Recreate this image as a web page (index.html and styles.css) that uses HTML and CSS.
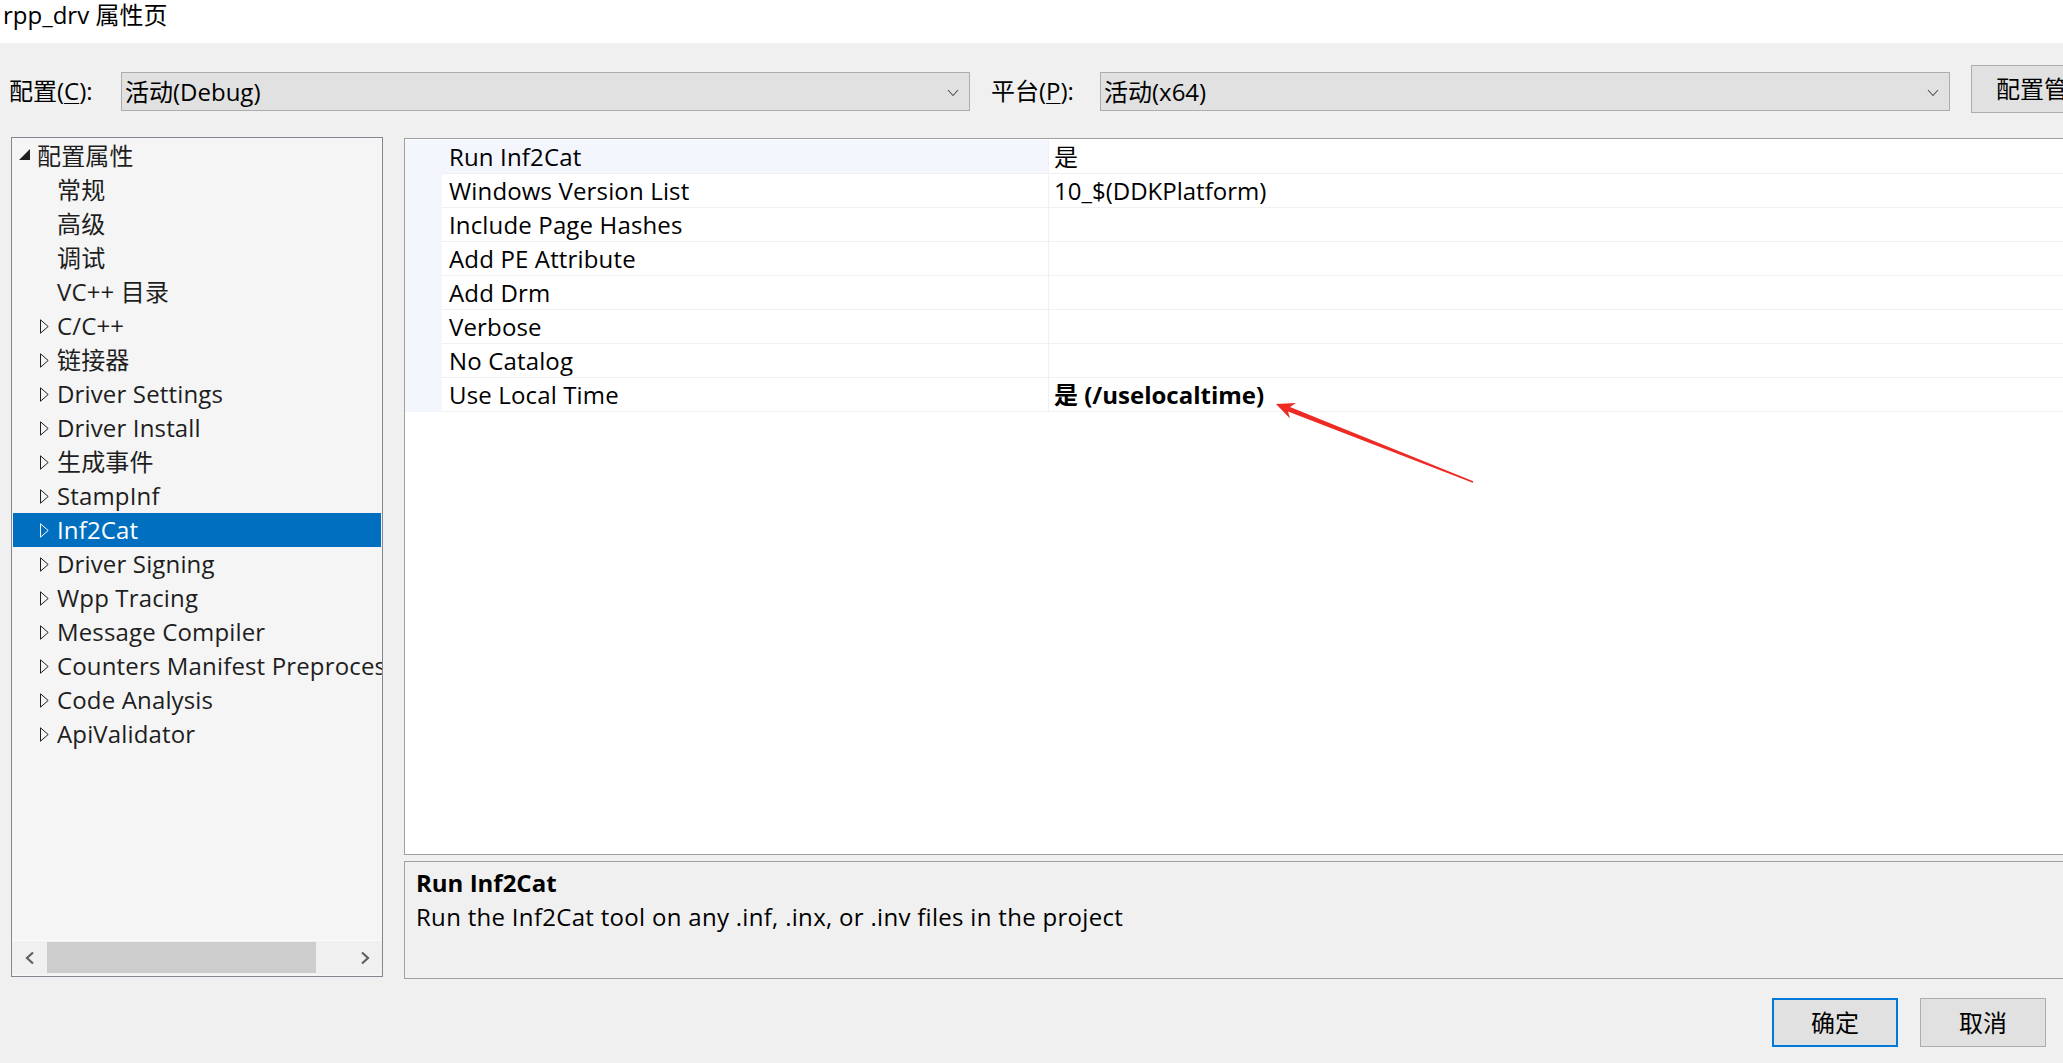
FILE: index.html
```html
<!DOCTYPE html>
<html lang="zh-CN">
<head>
<meta charset="utf-8">
<title>rpp_drv 属性页</title>
<link rel="stylesheet" href="styles.css">
</head>
<body>
<div class="window">
  <div class="titlebar">rpp_drv 属性页</div>

  <div class="toolbar">
    <span class="label label-config">配置(<u>C</u>):</span>
    <div class="combo combo-config">
      <span class="combo-text">活动(Debug)</span>
      <svg class="chev" width="12" height="8" viewBox="0 0 12 8"><path d="M1 1 L6 6.5 L11 1" fill="none" stroke="#505050" stroke-width="1.1"/></svg>
    </div>
    <span class="label label-platform">平台(<u>P</u>):</span>
    <div class="combo combo-platform">
      <span class="combo-text">活动(x64)</span>
      <svg class="chev" width="12" height="8" viewBox="0 0 12 8"><path d="M1 1 L6 6.5 L11 1" fill="none" stroke="#505050" stroke-width="1.1"/></svg>
    </div>
    <div class="btn btn-manager">配置管理器(<u>O</u>)...</div>
  </div>

  <div class="main">
    <div class="tree">
      <div class="tree-rows">
        <div class="row root">
          <svg class="tw-open" width="11" height="11" viewBox="0 0 11 11"><path d="M11 0 L11 11 L0 11 Z" fill="#1e1e1e"/></svg>
          <span>配置属性</span>
        </div>
        <div class="row leaf"><span>常规</span></div>
        <div class="row leaf"><span>高级</span></div>
        <div class="row leaf"><span>调试</span></div>
        <div class="row leaf"><span>VC++ 目录</span></div>
        <div class="row child"><svg class="tw" width="9" height="15" viewBox="0 0 9 15"><path d="M0.5 0.8 L8.2 7.5 L0.5 14.2 Z" fill="none" stroke="currentColor" stroke-width="1"/></svg><span>C/C++</span></div>
        <div class="row child"><svg class="tw" width="9" height="15" viewBox="0 0 9 15"><path d="M0.5 0.8 L8.2 7.5 L0.5 14.2 Z" fill="none" stroke="currentColor" stroke-width="1"/></svg><span>链接器</span></div>
        <div class="row child"><svg class="tw" width="9" height="15" viewBox="0 0 9 15"><path d="M0.5 0.8 L8.2 7.5 L0.5 14.2 Z" fill="none" stroke="currentColor" stroke-width="1"/></svg><span>Driver Settings</span></div>
        <div class="row child"><svg class="tw" width="9" height="15" viewBox="0 0 9 15"><path d="M0.5 0.8 L8.2 7.5 L0.5 14.2 Z" fill="none" stroke="currentColor" stroke-width="1"/></svg><span>Driver Install</span></div>
        <div class="row child"><svg class="tw" width="9" height="15" viewBox="0 0 9 15"><path d="M0.5 0.8 L8.2 7.5 L0.5 14.2 Z" fill="none" stroke="currentColor" stroke-width="1"/></svg><span>生成事件</span></div>
        <div class="row child"><svg class="tw" width="9" height="15" viewBox="0 0 9 15"><path d="M0.5 0.8 L8.2 7.5 L0.5 14.2 Z" fill="none" stroke="currentColor" stroke-width="1"/></svg><span>StampInf</span></div>
        <div class="row child selected"><svg class="tw" width="9" height="15" viewBox="0 0 9 15"><path d="M0.5 0.8 L8.2 7.5 L0.5 14.2 Z" fill="none" stroke="currentColor" stroke-width="1"/></svg><span>Inf2Cat</span></div>
        <div class="row child"><svg class="tw" width="9" height="15" viewBox="0 0 9 15"><path d="M0.5 0.8 L8.2 7.5 L0.5 14.2 Z" fill="none" stroke="currentColor" stroke-width="1"/></svg><span>Driver Signing</span></div>
        <div class="row child"><svg class="tw" width="9" height="15" viewBox="0 0 9 15"><path d="M0.5 0.8 L8.2 7.5 L0.5 14.2 Z" fill="none" stroke="currentColor" stroke-width="1"/></svg><span>Wpp Tracing</span></div>
        <div class="row child"><svg class="tw" width="9" height="15" viewBox="0 0 9 15"><path d="M0.5 0.8 L8.2 7.5 L0.5 14.2 Z" fill="none" stroke="currentColor" stroke-width="1"/></svg><span>Message Compiler</span></div>
        <div class="row child"><svg class="tw" width="9" height="15" viewBox="0 0 9 15"><path d="M0.5 0.8 L8.2 7.5 L0.5 14.2 Z" fill="none" stroke="currentColor" stroke-width="1"/></svg><span>Counters Manifest Preprocessor</span></div>
        <div class="row child"><svg class="tw" width="9" height="15" viewBox="0 0 9 15"><path d="M0.5 0.8 L8.2 7.5 L0.5 14.2 Z" fill="none" stroke="currentColor" stroke-width="1"/></svg><span>Code Analysis</span></div>
        <div class="row child"><svg class="tw" width="9" height="15" viewBox="0 0 9 15"><path d="M0.5 0.8 L8.2 7.5 L0.5 14.2 Z" fill="none" stroke="currentColor" stroke-width="1"/></svg><span>ApiValidator</span></div>
      </div>
      <div class="hscroll">
        <div class="sb-btn">
          <svg width="12" height="14" viewBox="0 0 12 14"><path d="M9 1.5 L3 7 L9 12.5" fill="none" stroke="#606060" stroke-width="2.2"/></svg>
        </div>
        <div class="sb-track"><div class="sb-thumb"></div></div>
        <div class="sb-btn">
          <svg width="12" height="14" viewBox="0 0 12 14"><path d="M3 1.5 L9 7 L3 12.5" fill="none" stroke="#606060" stroke-width="2.2"/></svg>
        </div>
      </div>
    </div>

    <div class="right">
      <div class="grid">
        <div class="prow first"><div class="gut"></div><div class="pname">Run Inf2Cat</div><div class="pval">是</div></div>
        <div class="prow"><div class="gut"></div><div class="pname">Windows Version List</div><div class="pval">10_$(DDKPlatform)</div></div>
        <div class="prow"><div class="gut"></div><div class="pname">Include Page Hashes</div><div class="pval"></div></div>
        <div class="prow"><div class="gut"></div><div class="pname">Add PE Attribute</div><div class="pval"></div></div>
        <div class="prow"><div class="gut"></div><div class="pname">Add Drm</div><div class="pval"></div></div>
        <div class="prow"><div class="gut"></div><div class="pname">Verbose</div><div class="pval"></div></div>
        <div class="prow"><div class="gut"></div><div class="pname">No Catalog</div><div class="pval"></div></div>
        <div class="prow"><div class="gut"></div><div class="pname">Use Local Time</div><div class="pval bold">是 (/uselocaltime)</div></div>
      </div>
      <div class="desc">
        <div class="desc-title">Run Inf2Cat</div>
        <div class="desc-text">Run the Inf2Cat tool on any .inf, .inx, or .inv files in the project</div>
      </div>
    </div>
  </div>

  <div class="footer">
    <div class="btn btn-ok">确定</div>
    <div class="btn btn-cancel">取消</div>
  </div>

  <svg class="annot" width="2063" height="1063" viewBox="0 0 2063 1063">
    <polygon points="1276,404 1296,403 1290,407 1473.3,481.3 1472.7,482.7 1288,411.5 1290,418.5" fill="#ee2a24"/>
  </svg>
</div>
</body>
</html>
```

FILE: styles.css
```css
* { box-sizing: border-box; }
html, body {
  margin: 0;
  padding: 0;
  width: 2063px;
  height: 1063px;
  overflow: hidden;
  background: #f0f0f0;
}
.window {
  position: relative;
  width: 2063px;
  height: 1063px;
  overflow: hidden;
  font-family: "Open Sans", "Noto Sans CJK SC", sans-serif;
  font-size: 24px;
  color: #000;
}
u { text-decoration: underline; text-underline-offset: 3px; text-decoration-thickness: 1px; }

.titlebar {
  height: 43px;
  background: #fff;
  padding-left: 3px;
  line-height: 30px;
  white-space: nowrap;
}

.toolbar {
  height: 94px;
  display: flex;
  align-items: flex-start;
  padding-top: 22px;
  white-space: nowrap;
}
.toolbar > * { flex: none; }
.label {
  height: 39px;
  margin-top: 7px;
  line-height: 38px;
  color: #000;
}
.label-config { margin-left: 9px; width: 112px; }
.label-platform { margin-left: 21px; width: 109px; }
.combo {
  margin-top: 7px;
  height: 39px;
  background: #e1e1e1;
  border: 1px solid #adadad;
  display: flex;
  align-items: center;
  justify-content: space-between;
  padding: 0 10px 0 3px;
}
.combo-config { width: 849px; }
.combo-platform { width: 850px; }
.combo-text { line-height: 36px; }
.chev { margin-top: 2px; }
.btn {
  background: #e1e1e1;
  border: 1px solid #adadad;
  text-align: center;
  white-space: nowrap;
  overflow: hidden;
}
.btn-manager {
  margin-left: 21px;
  width: 260px;
  height: 48px;
  line-height: 46px;
  text-align: left;
  padding-left: 24px;
}

.main {
  display: flex;
  align-items: flex-start;
  height: 841px;
}
.main > * { flex: none; }
.tree {
  margin-left: 11px;
  width: 372px;
  height: 840px;
  background: #f5f5f5;
  border: 1px solid #828790;
  display: flex;
  flex-direction: column;
  overflow: hidden;
}
.tree-rows {
  flex: 1;
  padding-top: 1px;
  overflow: hidden;
}
.row {
  height: 34px;
  display: flex;
  align-items: center;
  white-space: nowrap;
  color: #1e1e1e;
  margin-right: 1px;
}
.row span { line-height: 34px; letter-spacing: 0.15px; }
.row.root { padding-left: 7px; }
.row.root .tw-open { margin-right: 7px; margin-top: -4px; }
.row.leaf { padding-left: 45px; }
.row.child { padding-left: 28px; }
.row.child .tw { margin-right: 8px; flex: none; color: #1e1e1e; }
.row.selected {
  background: #006fc0;
  color: #fff;
  margin-left: 1px;
  padding-left: 27px;
}
.row.selected .tw { color: #fff; }

.hscroll {
  height: 34px;
  flex: none;
  display: flex;
  background: #f0f0f0;
  border-top: 1px solid #fafafa;
  margin-bottom: 2px;
}
.sb-btn {
  width: 35px;
  display: flex;
  align-items: center;
  justify-content: center;
}
.sb-track {
  flex: 1;
  display: flex;
  align-items: center;
}
.sb-thumb {
  width: 269px;
  height: 31px;
  background: #cdcdcd;
}

.right {
  margin-left: 21px;
  width: 1700px;
  display: flex;
  flex-direction: column;
}
.grid {
  margin-top: 1px;
  height: 717px;
  background: #fff;
  border: 1px solid #a0a0a0;
  padding-top: 1px;
}
.prow {
  height: 34px;
  display: flex;
}
.gut {
  width: 37px;
  background: #f3f6fc;
  flex: none;
}
.pname {
  width: 607px;
  flex: none;
  padding-left: 7px;
  line-height: 33px;
  border-bottom: 1px solid #f0f0f3;
  border-right: 1px solid #f0f0f3;
  white-space: nowrap;
  color: #000;
  letter-spacing: 0.15px;
}
.prow.first .pname { background: #f3f6fc; }
.pval {
  flex: 1;
  padding-left: 5px;
  line-height: 33px;
  border-bottom: 1px solid #f0f0f3;
  white-space: nowrap;
}
.pval.bold { font-weight: 700; }

.desc {
  margin-top: 6px;
  height: 118px;
  background: #f0f0f0;
  border: 1px solid #a0a0a0;
  padding: 6px 0 0 11px;
}
.desc-title {
  font-weight: 700;
  line-height: 30px;
}
.desc-text {
  line-height: 30px;
  margin-top: 4px;
  letter-spacing: 0.3px;
}

.footer {
  height: 85px;
  display: flex;
  justify-content: flex-end;
  align-items: flex-start;
  padding-top: 20px;
  padding-right: 17px;
}
.btn-ok {
  width: 126px;
  height: 49px;
  line-height: 45px;
  border: 2px solid #0078d7;
}
.btn-cancel {
  margin-left: 22px;
  width: 126px;
  height: 49px;
  line-height: 47px;
}

.annot {
  position: absolute;
  left: 0;
  top: 0;
  pointer-events: none;
}
```
